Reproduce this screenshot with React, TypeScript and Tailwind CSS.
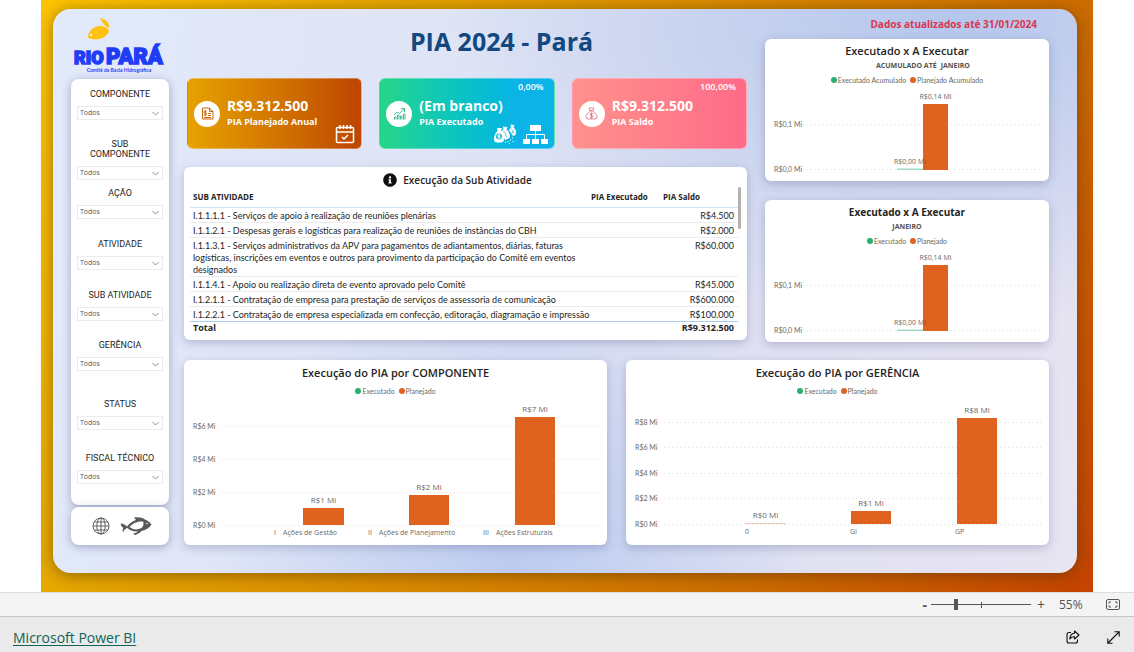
import { useState, type ReactNode } from 'react'
import { FaInfoCircle } from 'react-icons/fa'

/* ---------- Data ---------- */

const filters = [
  { id: 'componente', label: 'COMPONENTE', space: 'mb-[19px]' },
  { id: 'sub-componente', label: 'SUB COMPONENTE', space: 'mb-2' },
  { id: 'acao', label: 'AÇÃO', space: 'mb-5' },
  { id: 'atividade', label: 'ATIVIDADE', space: 'mb-5' },
  { id: 'sub-atividade', label: 'SUB ATIVIDADE', space: 'mb-[19px]' },
  { id: 'gerencia', label: 'GERÊNCIA', space: 'mb-7' },
  { id: 'status', label: 'STATUS', space: 'mb-[23px]' },
  { id: 'fiscal', label: 'FISCAL TÉCNICO', space: 'mb-5' },
]

const rows = [
  ['I.1.1.1.1 - Serviços de apoio à realização de reuniões plenárias', 'R$4.500'],
  ['I.1.1.2.1 - Despesas gerais e logísticas para realização de reuniões de instâncias do CBH', 'R$2.000'],
  [
    'I.1.1.3.1 - Serviços administrativos da APV para pagamentos de adiantamentos, diárias, faturas logísticas, inscrições em eventos e outros para provimento da participação do Comitê em eventos designados',
    'R$60.000',
  ],
  ['I.1.1.4.1 - Apoio ou realização direta de evento aprovado pelo Comitê', 'R$45.000'],
  ['I.1.2.1.1 - Contratação de empresa para prestação de serviços de assessoria de comunicação', 'R$600.000'],
  ['I.1.2.2.1 - Contratação de empresa especializada em confecção, editoração, diagramação e impressão', 'R$100.000'],
]

/* ---------- Cards ---------- */

function Card({ className = '', children }: { className?: string; children: ReactNode }) {
  return <section className={`rounded-md bg-white shadow-[0_3px_10px_rgba(60,70,120,0.28)] ${className}`}>{children}</section>
}

function Kpi({
  value,
  label,
  percent,
  icon,
  extra,
  className,
}: {
  value: string
  label: string
  percent?: string
  icon: ReactNode
  extra?: ReactNode
  className: string
}) {
  return (
    <section className={`relative flex h-[71px] min-w-0 flex-1 items-center gap-[7px] rounded-md border border-white/30 px-1.5 text-white ${className}`}>
      <span className="flex size-[26px] shrink-0 items-center justify-center rounded-full bg-white">{icon}</span>
      <div className="whitespace-nowrap font-bold">
        <p className="text-[14px] leading-4">{value}</p>
        <p className="text-[9px] leading-4">{label}</p>
      </div>
      {percent && <span className="absolute right-2.5 top-0.5 text-[9px] font-semibold leading-3">{percent}</span>}
      {extra && <div className="absolute bottom-1 right-1.5 flex items-end gap-1.5">{extra}</div>}
    </section>
  )
}

/* ---------- Charts ---------- */

function Legend({ items }: { items: [string, string] }) {
  return (
    <ul className="flex justify-center gap-1 font-['Lato',sans-serif] text-[7px] leading-[10px] text-[#6b6967]">
      <li className="flex items-center gap-px">
        <span className="size-1.5 rounded-full bg-[#2aae74]" />
        {items[0]}
      </li>
      <li className="flex items-center gap-px">
        <span className="size-1.5 rounded-full bg-[#e0621f]" />
        {items[1]}
      </li>
    </ul>
  )
}

type Tick = { y: number; label: string }
type Bar = { x: number; w: number; top: number; label: string; labelY: number; fill?: string }
type Category = { x: number; label: string; index?: string; indexX?: number }

function Plot({
  title,
  width,
  height,
  base,
  gridStart,
  gridEnd,
  labelSize,
  ticks,
  bars,
  categories = [],
}: {
  title: string
  width: number
  height: number
  base: number
  gridStart: number
  gridEnd: number
  labelSize: number
  ticks: Tick[]
  bars: Bar[]
  categories?: Category[]
}) {
  return (
    <svg viewBox={`0 0 ${width} ${height}`} className="block h-auto w-full" role="img" aria-label={title} fill="#6b6967">
      {ticks.map((t) => (
        <g key={t.label}>
          <text x="9" y={t.y + 2.5} fontSize="7" className="font-['Lato',sans-serif]">{t.label}</text>
          <line x1={gridStart} x2={gridEnd} y1={t.y} y2={t.y} stroke="#dedede" strokeDasharray="1 3" />
        </g>
      ))}
      {bars.map((b) => (
        <rect key={b.x} x={b.x} y={b.top} width={b.w} height={base - b.top} fill={b.fill ?? '#e0621f'} />
      ))}
      {bars.map((b) => (
        <text key={b.x} x={b.x + b.w / 2} y={b.labelY} fontSize={labelSize} textAnchor="middle">{b.label}</text>
      ))}
      {categories.map((c) => (
        <g key={c.label} fontSize="7">
          {c.index && <text x={c.indexX} y={base + 10}>{c.index}</text>}
          <text x={c.x} y={base + 10}>{c.label}</text>
        </g>
      ))}
    </svg>
  )
}

function MonthChart({ titleClass, subtitle, items }: { titleClass: string; subtitle: ReactNode; items: [string, string] }) {
  return (
    <Card className="pt-1">
      <h2 className={`text-center leading-4 text-[#252423] ${titleClass}`}>Executado x A Executar</h2>
      <p className="flex justify-center gap-1 pb-1 pt-0.5 text-[7px] font-bold leading-[10px] text-[#55534f]">{subtitle}</p>
      <Legend items={items} />
      <Plot
        title="Executado x A Executar"
        width={284}
        height={96}
        base={85}
        gridStart={38}
        gridEnd={277}
        labelSize={7}
        ticks={[
          { y: 39.5, label: 'R$0,1 Mi' },
          { y: 84.5, label: 'R$0,0 Mi' },
        ]}
        bars={[
          { x: 132, w: 26, top: 83.5, label: 'R$0,00 Mi', labelY: 79, fill: '#9fdcc2' },
          { x: 158, w: 25, top: 19, label: 'R$0,14 Mi', labelY: 14 },
        ]}
      />
    </Card>
  )
}

/* ---------- Icons ---------- */

function Logo() {
  return (
    <svg viewBox="0 0 98 58" className="block w-full" role="img" aria-label="Rio Pará" fill="#1f3df5">
      <path d="M17 21c0-7 5-12 12-12 4 0 8 2 9 5-1 4-5 7-10 8-4 1-7 0-11-1z" fill="#ffc20e" />
      <path d="M29 1c5 1 10 4 9 10-3-1-7-5-9-10z" fill="#ffc20e" />
      <circle cx="20" cy="18" r="1" fill="#fff" />
      <g stroke="#1f3df5" strokeWidth="1.5" fontWeight="900" className="font-['Roboto',sans-serif]">
        <text x="3" y="47" fontSize="18">RIO</text>
        <text x="35" y="47" fontSize="22">PARÁ</text>
      </g>
      <text x="48" y="55" fontSize="5" fontWeight="bold" textAnchor="middle" className="font-['Lato',sans-serif]">Comitê da Bacia Hidrográfica</text>
    </svg>
  )
}

function InvoiceIcon() {
  return (
    <svg width="13" height="13" viewBox="0 0 26 26" fill="none" stroke="#c9660a" strokeWidth="2">
      <path d="M3 2h14l7 7v15H3zM17 2v7h7" />
      <path d="M11 8H8q-2 0-2 2t2 2h1q2 0 2 2t-2 2H6M8.500 6v12" />
      <path d="M14 13h6M14 17h6M6 21h14" />
    </svg>
  )
}

function GrowthIcon() {
  return (
    <svg width="13" height="13" viewBox="0 0 26 26" fill="none" stroke="#2fb886" strokeWidth="1.8">
      <path d="M2 16l6-6 5 3 9-9M16 3h7v7" />
      <path d="M3 25v-5h3v5M9 25v-9h3v9M15 25v-7h3v7M21 25V14h3v11" />
    </svg>
  )
}

function MoneyBagIcon() {
  return (
    <svg width="13" height="13" viewBox="0 0 26 26" fill="none" stroke="#dc6a7c" strokeWidth="1.6">
      <path d="M8 2h10l-2 5h-6zM9 8h8M10 9C5 12 2 16 2 20q0 4 4 4h14q4 0 4-4c0-4-3-8-8-11" />
      <path d="M16 13h-4q-2 0-2 2t2 2h2q2 0 2 2t-2 2h-4M13 11v12" />
    </svg>
  )
}

function CalendarIcon() {
  return (
    <svg width="20" height="20" viewBox="0 0 20 20" fill="none" stroke="#fff" strokeWidth="1.5">
      <rect x="1.500" y="3.500" width="17" height="15" rx="1" />
      <path d="M2 8h16M5 1v4M8.500 1v4M12 1v4M15.500 1v4M7 13l2 2 4-4" />
    </svg>
  )
}

function MoneyBagsIcon() {
  return (
    <svg width="23" height="20" viewBox="0 0 46 40" fill="#fff">
      <path d="M33 1l8 1-2 5c5 3 6 9 4 15l-5 2-8-12 4-5z" />
      <path d="M18 5l9 1-2 5c5 4 8 10 6 17l-9 4-9-17 6-5z" />
      <path d="M6 8h10l-3 6c6 4 9 10 7 18q-1 5-7 5H7q-7 0-7-7c0-7 3-12 7-16z" />
      <circle cx="10" cy="25" r="6" fill="#17b5cb" />
      <path d="M13 22H9q-2 0-2 2t2 1h2q2 0 2 2t-2 1H7M10 20v10" fill="none" stroke="#fff" strokeWidth="1.5" />
      <path d="M18 13q7 6 7 14M34 9q5 4 5 10M35 17h3" fill="none" stroke="#17b5cb" strokeWidth="1.5" />
      <path d="M22 36h2v2h-2zM27 34h2v2h-2zM32 31h2v2h-2zM30 38h2v2h-2zM37 34h2v2h-2zM36 27h2v2h-2z" />
    </svg>
  )
}

function HierarchyIcon() {
  return (
    <svg width="25" height="19" viewBox="0 0 25 19" fill="#fff">
      <path d="M7 0h11v6H7zM0 14h7v5H0zM9 14h7v5H9zM18 14h7v5h-7z" />
      <path d="M12.500 6v8M3.500 14V9.500h18V14" fill="none" stroke="#fff" />
    </svg>
  )
}

function GlobeIcon() {
  return (
    <svg width="18" height="18" viewBox="0 0 18 18" fill="none" stroke="#555" strokeWidth="0.9">
      <circle cx="9" cy="9" r="8" />
      <ellipse cx="9" cy="9" rx="4.200" ry="8" />
      <path d="M9 1v16M1 9h16M2.200 5h13.600M2.200 13h13.600" />
    </svg>
  )
}

function FishIcon() {
  return (
    <svg width="32" height="18" viewBox="0 0 64 36" fill="#59595b">
      <path d="M1 13c5 0 9 2 13 6 5-6 11-11 18-13l-4-5c9-1 17 0 22 4 6 2 10 6 13 10-4 7-11 11-20 13-4 4-8 7-14 8l-2-3c4-1 7-2 9-4-9 1-16-2-21-7-4 1-7 4-9 9-1-4-1-7 1-9-3-2-5-5-6-9z" />
      <path d="M19 20c6-7 15-12 27-11 2 4 1 9-3 13-8 4-17 4-24-2z" fill="#fff" />
      <circle cx="54" cy="13" r="1.500" fill="#fff" />
    </svg>
  )
}

function Chevron() {
  return (
    <svg width="7" height="5" viewBox="0 0 7 5" fill="none" stroke="#777" strokeWidth="0.8" className="pointer-events-none absolute right-1 top-[5px]">
      <path d="M0.500 1l3 3 3-3" />
    </svg>
  )
}

/* ---------- Sections ---------- */

function Sidebar() {
  return (
    <aside className="flex w-[98px] shrink-0 flex-col pt-2">
      <Logo />
      <form className="mt-1 flex-1 rounded-lg bg-white px-1.5 pt-2.5 shadow-[0_2px_10px_rgba(60,70,120,0.4)]">
        {filters.map((f) => (
          <div key={f.id} className={f.space}>
            <label htmlFor={f.id} className="mb-[7px] block px-1 text-center font-['Roboto',sans-serif] text-[9px] leading-[10px] text-[#252423]">
              {f.label}
            </label>
            <div className="relative">
              <select id={f.id} className="block h-3.5 w-full appearance-none border border-[#ececec] bg-white px-0.5 text-[7px] leading-3 text-[#555]">
                <option>Todos</option>
              </select>
              <Chevron />
            </div>
          </div>
        ))}
      </form>
      <div className="mt-0.5 flex h-[38px] items-center justify-center gap-2.5 rounded-lg bg-white pl-1 shadow-[0_2px_10px_rgba(60,70,120,0.4)]">
        <a href="#site" aria-label="Site"><GlobeIcon /></a>
        <a href="#comite" aria-label="Comitê"><FishIcon /></a>
      </div>
    </aside>
  )
}

function ActivityTable() {
  return (
    <Card className="px-1.5 pb-1.5 pt-1.5">
      <h2 className="flex items-center justify-center gap-1.5 pb-1 pr-4 text-[10px] font-semibold leading-[14px] text-[#252423]">
        <FaInfoCircle size={14} color="#111" />
        Execução da Sub Atividade
      </h2>
      <div className="flex items-start">
        <table className="min-w-0 flex-1 table-fixed border-separate border-spacing-0 text-[9px] leading-3 text-[#252423]">
          <colgroup>
            <col />
            <col className="w-[72px]" />
            <col className="w-[75px]" />
          </colgroup>
          <thead className="text-left text-[8px]">
            <tr className="*:border-b *:border-[#cfe3f8] *:pb-1">
              <th className="pl-[3px]">SUB ATIVIDADE</th>
              <th>PIA Executado</th>
              <th>PIA Saldo</th>
            </tr>
          </thead>
          <tbody className="align-top font-['Lato',sans-serif]">
            {rows.map(([name, value]) => (
              <tr key={name} className="*:border-b *:border-[#ececec] *:pt-0.5 last:*:border-[#a9cdf0]">
                <td className="pl-[3px]">{name}</td>
                <td />
                <td className="pr-1 text-right">{value}</td>
              </tr>
            ))}
          </tbody>
          <tfoot className="font-bold">
            <tr>
              <td className="pl-[3px]">Total</td>
              <td />
              <td className="pr-1 text-right">R$9.312.500</td>
            </tr>
          </tfoot>
        </table>
        <span className="-mt-1 h-[42px] w-[3px] rounded-full bg-[#b3b0ad]" />
      </div>
    </Card>
  )
}

function ExecutionChart({ title, ...plot }: { title: string; base: number; ticks: Tick[]; bars: Bar[]; categories: Category[] }) {
  return (
    <Card className="pt-1">
      <h2 className="text-center text-[11px] font-semibold leading-[18px] text-[#252423]">{title}</h2>
      <div className="pb-0.5 pt-1">
        <Legend items={['Executado', 'Planejado']} />
      </div>
      <Plot title={title} width={423} height={147} gridStart={38} gridEnd={417} labelSize={8} {...plot} />
    </Card>
  )
}

function ZoomBar() {
  const [zoom, setZoom] = useState(24)
  return (
    <div className="flex h-6 items-center justify-end border-t border-[#dcdcdc] bg-[#f4f4f4] pr-3.5 text-[#555]">
      <button aria-label="Reduzir" className="px-1 text-sm font-bold leading-none">-</button>
      <div className="relative flex h-4 w-[100px] items-center">
        <span className="absolute left-1/2 h-1.5 w-px bg-[#555]" />
        <input
          type="range"
          aria-label="Zoom"
          value={zoom}
          onChange={(e) => setZoom(Number(e.target.value))}
          className="relative m-0 h-px w-full appearance-none bg-[#555] [&::-webkit-slider-thumb]:h-[11px] [&::-webkit-slider-thumb]:w-1 [&::-webkit-slider-thumb]:appearance-none [&::-webkit-slider-thumb]:bg-[#555]"
        />
      </div>
      <button aria-label="Ampliar" className="px-1.5 text-sm leading-none">+</button>
      <span className="w-[51px] pl-2 text-xs">55%</span>
      <button aria-label="Ajustar à página" className="pl-1">
        <svg width="14" height="11" viewBox="0 0 14 11" fill="none" stroke="#555">
          <rect x="0.500" y="0.500" width="13" height="10" rx="1.500" />
          <path d="M5 3H3v1.500M9 3h2v1.500M5 8H3V6.500M9 8h2V6.500" />
        </svg>
      </button>
    </div>
  )
}

function Footer() {
  return (
    <footer className="box-content flex h-9 items-center border-t border-[#c4c4c4] bg-[#eaeaea] pl-[13px] pr-3.5">
      <a href="https://powerbi.microsoft.com" className="pt-1 text-[14px] text-[#0f6456] underline underline-offset-2">
        Microsoft Power BI
      </a>
      <div className="ml-auto flex items-center gap-[27px] pt-1">
        <button aria-label="Compartilhar">
          <svg width="14" height="14" viewBox="0 0 14 14" fill="none" stroke="#111" strokeWidth="1.100">
            <path d="M5 2.500H3Q1 2.500 1 4.500V11q0 2 2 2h6.500q2 0 2-2v-1.500" />
            <path d="M8.500 1l4.500 4-4.500 4V6.800Q5.500 6.500 3.800 9 4 3.800 8.500 3.300z" strokeLinejoin="round" />
          </svg>
        </button>
        <button aria-label="Tela cheia">
          <svg width="13" height="13" viewBox="0 0 13 13" fill="none" stroke="#111" strokeWidth="1.100">
            <path d="M1 12L12 1M7.500 0.800h4.700v4.700M0.800 7.500v4.700h4.700" />
          </svg>
        </button>
      </div>
    </footer>
  )
}

export default function App() {
  return (
    <div className="bg-white font-['Open_Sans','Noto_Sans',sans-serif]">
      <main className="mx-[41px] bg-[linear-gradient(120deg,#ffc400,#e6a800_25%,#cc6c00_75%,#c54300)] pb-[19px] pl-3 pr-4 pt-[9px]">
        <div className="flex gap-[15px] rounded-[18px] bg-[radial-gradient(ellipse_at_88%_0%,#b4c6ec,transparent_40%),radial-gradient(ellipse_at_45%_100%,#bccbf0,transparent_38%),linear-gradient(100deg,#e2eafb,#dde0f2_60%,#e8e4f2)] pb-7 pl-[18px] pr-7 shadow-[0_2px_16px_rgba(60,40,0,0.5)]">
          <Sidebar />
          <div className="flex min-w-0 flex-1 flex-col gap-[18px]">
            <div className="flex gap-[18px]">
              <div className="min-w-0 flex-1">
                <h1 className="pb-[17px] pl-[72px] pt-3 text-center text-[25px] font-bold leading-10 text-[#12487f]">PIA 2024 - Pará</h1>
                <div className="mb-[18px] flex gap-[17px] pl-[3px]">
                  <Kpi
                    value="R$9.312.500"
                    label="PIA Planejado Anual"
                    icon={<InvoiceIcon />}
                    extra={<CalendarIcon />}
                    className="bg-linear-to-r from-[#e6a200] to-[#bd4500]"
                  />
                  <Kpi
                    value="(Em branco)"
                    label="PIA Executado"
                    percent="0,00%"
                    icon={<GrowthIcon />}
                    extra={<><MoneyBagsIcon /><HierarchyIcon /></>}
                    className="bg-linear-to-r from-[#27d587] to-[#0bb3e8] to-80%"
                  />
                  <Kpi
                    value="R$9.312.500"
                    label="PIA Saldo"
                    percent="100,00%"
                    icon={<MoneyBagIcon />}
                    className="bg-linear-to-r from-[#ff918c] to-[#ff6a88]"
                  />
                </div>
                <ActivityTable />
              </div>
              <div className="flex w-[284px] shrink-0 flex-col gap-[19px]">
                <p className="-mb-3 pr-3 pt-2 text-right text-[10px] font-bold leading-[15px] text-[#d9364f]">
                  Dados atualizados até 31/01/2024
                </p>
                <MonthChart
                  titleClass="text-[11px] font-semibold"
                  subtitle={<><span className="pl-8">ACUMULADO ATÉ</span><span>JANEIRO</span></>}
                  items={['Executado Acumulado', 'Planejado Acumulado']}
                />
                <MonthChart titleClass="text-[10px] font-bold" subtitle="JANEIRO" items={['Executado', 'Planejado']} />
              </div>
            </div>
            <div className="grid grid-cols-2 gap-[19px]">
              <ExecutionChart
                title="Execução do PIA por COMPONENTE"
                base={127}
                ticks={[
                  { y: 28.5, label: 'R$6 Mi' },
                  { y: 61.5, label: 'R$4 Mi' },
                  { y: 94.5, label: 'R$2 Mi' },
                  { y: 127.5, label: 'R$0 Mi' },
                ]}
                bars={[
                  { x: 119, w: 41, top: 110, label: 'R$1 Mi', labelY: 105 },
                  { x: 225, w: 40, top: 97, label: 'R$2 Mi', labelY: 92 },
                  { x: 331, w: 40, top: 19, label: 'R$7 Mi', labelY: 14 },
                ]}
                categories={[
                  { x: 99, label: 'Ações de Gestão', index: 'I', indexX: 90 },
                  { x: 195, label: 'Ações de Planejamento', index: 'II', indexX: 184 },
                  { x: 312, label: 'Ações Estruturais', index: 'III', indexX: 299 },
                ]}
              />
              <ExecutionChart
                title="Execução do PIA por GERÊNCIA"
                base={126}
                ticks={[
                  { y: 24.5, label: 'R$8 Mi' },
                  { y: 49.5, label: 'R$6 Mi' },
                  { y: 75.5, label: 'R$4 Mi' },
                  { y: 100.5, label: 'R$2 Mi' },
                  { y: 126.5, label: 'R$0 Mi' },
                ]}
                bars={[
                  { x: 119, w: 41, top: 125, label: 'R$0 Mi', labelY: 120, fill: '#f6cdb4' },
                  { x: 225, w: 40, top: 113, label: 'R$1 Mi', labelY: 108 },
                  { x: 331, w: 40, top: 20, label: 'R$8 Mi', labelY: 15 },
                ]}
                categories={[
                  { x: 119, label: '0' },
                  { x: 224, label: 'GI' },
                  { x: 329, label: 'GP' },
                ]}
              />
            </div>
          </div>
        </div>
      </main>
      <ZoomBar />
      <Footer />
    </div>
  )
}
